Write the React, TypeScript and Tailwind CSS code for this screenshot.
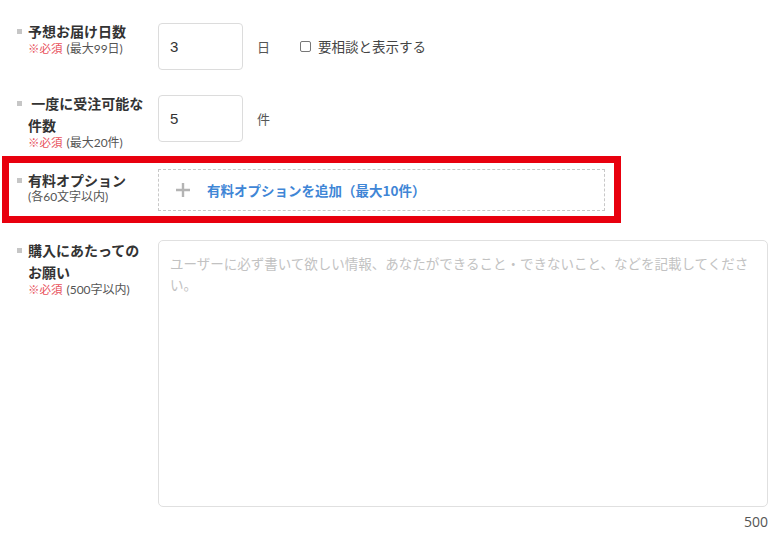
import type { ReactNode } from 'react'

const jp = { fontFamily: '"Noto Sans CJK JP", "Noto Sans", sans-serif' }

function Label({ title, note, required }: { title: ReactNode; note: string; required?: boolean }) {
  return (
    <div className="flex w-[141px] flex-none">
      <div className="flex h-[22px] w-[11px] flex-none items-center pt-[1px]">
        <span className="block h-[5px] w-[5px] bg-[#c6c6c6]" />
      </div>
      <div className="w-[120px]">
        <div className="text-[14px] font-bold leading-[22px] text-[#333]">{title}</div>
        <div
          className="whitespace-nowrap text-[12px] leading-[12px] text-[#555]"
          style={{ fontFamily: 'Lato, "Noto Sans CJK JP", sans-serif' }}
        >
          {required && <span className="mr-[4px] text-[11.5px] text-[#e8525c]" style={jp}>※必須</span>}
          {note}
        </div>
      </div>
    </div>
  )
}

function NumberBox({ value }: { value: string }) {
  return (
    <input
      defaultValue={value}
      className="mt-[3px] h-[47px] w-[85px] flex-none rounded-[4px] border border-[#dcdcdc] bg-white px-[11px] text-[15px] text-[#333] outline-none"
      style={{ fontFamily: '"Liberation Sans", Arial, sans-serif' }}
    />
  )
}

export default function App() {
  return (
    <div className="min-h-[546px] w-[783px] bg-white pt-[20px] pr-[15px]" style={jp}>
      {/* 予想お届け日数 */}
      <div className="flex items-start pl-[17px]">
        <Label title="予想お届け日数" note="(最大99日)" required />
        <NumberBox value="3" />
        <div className="mt-[3px] flex h-[47px] items-center">
          <span className="ml-[14px] text-[13px] text-[#555]">日</span>
          <label className="ml-[30px] flex items-center text-[13.5px] text-[#444]">
            <span className="mr-[7px] block h-[11px] w-[11px] rounded-[2px] border border-[#777] bg-white" />
            要相談と表示する
          </label>
        </div>
      </div>

      {/* 一度に受注可能な件数 */}
      <div className="mt-[22px] flex items-start pl-[17px]">
        <Label title={'\u00a0一度に受注可能な件数'} note="(最大20件)" required />
        <NumberBox value="5" />
        <div className="mt-[3px] flex h-[47px] items-center">
          <span className="ml-[14px] text-[13px] text-[#555]">件</span>
        </div>
      </div>

      {/* 有料オプション (highlighted) */}
      <div className="ml-[2px] mt-[7px] flex w-[619px] items-start border-[7px] border-[#e8000e] pt-[6px] pb-[5px] pl-[8px]">
        <Label title="有料オプション" note="(各60文字以内)" />
        <button className="flex h-[42px] w-[447px] flex-none items-center border border-dashed border-[#c8c8c8] bg-white pl-[16px] text-left">
          <svg width="16" height="16" viewBox="0 0 16 16" className="flex-none">
            <path d="M8 1v14M1 8h14" stroke="#b4b4b4" strokeWidth="2.4" />
          </svg>
          <span className="ml-[16px] text-[13.5px] font-semibold text-[#3f86d6]">有料オプションを追加（最大10件）</span>
        </button>
      </div>

      {/* 購入にあたってのお願い */}
      <div className="mt-[16px] flex items-start pl-[17px]">
        <Label title="購入にあたってのお願い" note="(500字以内)" required />
        <div className="mt-[1px] flex-1">
          <textarea
            className="block h-[267px] w-full resize-none rounded-[5px] border border-[#e0e0e0] bg-white px-[11px] pt-[12px] text-[13.5px] leading-[21px] text-[#333] outline-none placeholder:text-[#c2c2c2]"
            placeholder="ユーザーに必ず書いて欲しい情報、あなたができること・できないこと、などを記載してください。"
            style={jp}
          />
          <div
            className="mt-[7px] text-right text-[14px] leading-[16px] text-[#555]"
            style={{ fontFamily: '"Open Sans", "Noto Sans", sans-serif' }}
          >
            500
          </div>
        </div>
      </div>
    </div>
  )
}
